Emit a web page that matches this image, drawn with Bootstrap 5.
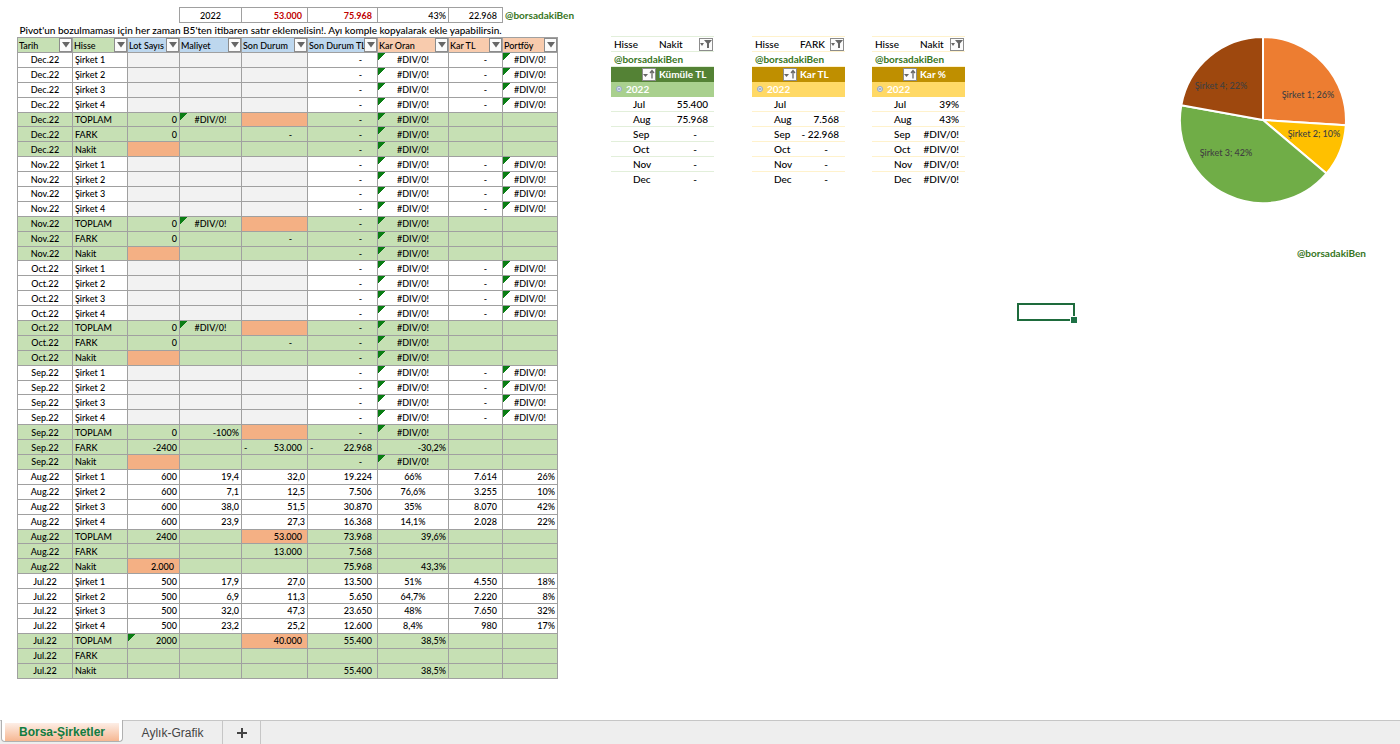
<!DOCTYPE html>
<html lang="tr">
<head>
<meta charset="utf-8">
<meta name="viewport" content="width=device-width, initial-scale=1">
<title>Borsa-Şirketler</title>
<link href="https://cdn.jsdelivr.net/npm/bootstrap@5.3.0/dist/css/bootstrap.min.css" rel="stylesheet">
<style>
body { font-family: Lato, "Liberation Sans", sans-serif; font-size: 9px; font-weight: 500; line-height: 13px; color: #000; background: #fff; }
table { border-collapse: collapse; table-layout: fixed; }
td, th { padding: 0 2px; font-weight: 500; white-space: nowrap; line-height: 13px; }
.handle { color: #38761d; font-size: 10px; font-weight: 700; }

.ledger { width: 541px; height: 672px; margin: 7px 0 0 17px; }
.ledger thead tr { height: 15px; }
.ledger .boxed, .ledger tbody td, .ledger .heads th { border: 1px solid #a0a0a0; }
.ledger .note { font-size: 10px; padding-left: 2px; }
.ledger .acc { padding-right: 5px; }
.ledger .dash { padding-right: 15px; }
.ledger .heads th { padding: 0 0 0 1px; }
.ledger .heads span { min-width: 0; }
.key { background: #c6e0b4; }
.inp { background: #bdd7ee; }
.res { background: #f8cbad; }
tr.total td { background: #c6e0b4; }
.ledger td.blank { background: #f2f2f2; }
.ledger td.entry, .ledger tr.total td.entry { background: #f4b084; }
.ledger td.err { background-image: linear-gradient(135deg, #0a7d14 0 5px, transparent 5px); background-size: 8px 8px; background-repeat: no-repeat; }
.red { color: #c00000; font-weight: 700; }

.drop { width: 14px; height: 14px; padding: 0; border: 1px solid #8c8c8c; background: #fbfbfb; display: flex; align-items: center; justify-content: center; flex: none; }
.ledger .drop { width: 13px; }
.drop svg { display: block; }

.pivots { margin: 36px 0 0 53px; }
.pivot { height: 150px; font-size: 10px; }
.pivot tr { height: 15px; }
.pivot th, .pivot td { border-bottom: 1px solid var(--line); padding: 0 6px 0 3px; }
.pivot tr:first-child > * { border-top: 1px solid var(--line); padding-right: 1px; }
.pivot tr:last-child > * { border-bottom: 0; }
.pivot .drop { height: 13px; }
.pivot .cap th { background: var(--cap); color: #fff; font-weight: 700; padding-right: 0; border-color: var(--cap); }
.pivot .year th { background: var(--year); color: #fff; font-weight: 700; padding-left: 5px; border-color: var(--year); }
.pivot .month { padding-left: 22px; padding-right: 0; }
.pivot .dash { padding-right: 17px; }
.pivot-green { width: 103px; --line: #e2efda; --cap: #548235; --year: #a9d08e; }
.pivot-gold { width: 93px; --line: #fff2cc; --cap: #bf8f00; --year: #ffd966; }
.gap-a { margin-right: 38px; }
.gap-b { margin-right: 27px; }

.picked { width: 58px; height: 18px; margin: 303px 0 0 52px; border: 2px solid #1e6b3c; }
.picked i { width: 6px; height: 6px; right: -4px; bottom: -4px; background: #1e7145; outline: 1px solid #fff; }
.chart { margin: 36px 34px 0 auto; }
.chart svg { display: block; margin-right: 19px; }
.chart text { font-size: 9px; fill: #404040; text-anchor: middle; }
.chart .handle { margin-top: 43px; }

.sheets { background: #eee; border-top: 1px solid #c6c6c6; height: 24px; font: 12px/16px "Liberation Sans", Arial, sans-serif; }
.sheets button { border: 0; border-right: 1px solid #c6c6c6; background: none; color: #444; padding: 0; }
.sheets .current { width: 122px; height: 22px; margin: -1px 0 0 1px; padding: 3px; background: #fff; border: 1px solid #b0b0b0; border-top: 0; border-radius: 0 0 4px 4px; }
.sheets .current span { display: block; line-height: 18px; font-weight: 700; color: #107c41; background: linear-gradient(#fdeee6, #f6b792); }
.sheets .other { width: 100px; }
.sheets .add { width: 38px; }
</style>
</head>
<body class="d-flex flex-column min-vh-100">

<main class="d-flex align-items-start flex-grow-1">
  <table class="ledger flex-shrink-0">
    <colgroup>
      <col style="width:55px"><col style="width:55px"><col style="width:52px"><col style="width:62px"><col style="width:66px"><col style="width:70px"><col style="width:71px"><col style="width:54px"><col style="width:55px">
    </colgroup>
    <thead>
      <tr>
        <td colspan="3"></td>
        <td class="boxed text-center">2022</td>
        <td class="boxed text-end acc red">53.000</td>
        <td class="boxed text-end acc red">75.968</td>
        <td class="boxed text-end">43%</td>
        <td class="boxed text-end acc">22.968</td>
        <td class="handle">@borsadakiBen</td>
      </tr>
      <tr><td colspan="9" class="note">Pivot'un bozulmaması için her zaman B5'ten itibaren satır eklemelisin!. Ayı komple kopyalarak ekle yapabilirsin.</td></tr>
      <tr class="heads" id="heads"></tr>
    </thead>
    <tbody id="rows"></tbody>
  </table>

  <section class="pivots d-flex flex-shrink-0" id="pivots"></section>

  <div class="picked position-relative flex-shrink-0"><i class="position-absolute"></i></div>

  <section class="chart d-flex flex-column align-items-end flex-shrink-0">
    <svg width="168" height="168" viewBox="-84 -84 168 168" role="img" aria-label="Portföy">
      <g stroke="#fff" stroke-width="2" stroke-linejoin="round">
        <path fill="#ed7d31" d="M0 0V-83A83 83 0 0 1 82.8 5.2Z"/>
        <path fill="#ffc000" d="M0 0L82.8 5.2A83 83 0 0 1 63.5 53.5Z"/>
        <path fill="#70ad47" d="M0 0L63.5 53.5A83 83 0 0 1 -81.7 -14.8Z"/>
        <path fill="#9e480e" d="M0 0L-81.7 -14.8A83 83 0 0 1 0 -83Z"/>
      </g>
      <text x="45" y="-22">Şirket 1; 26%</text>
      <text x="51" y="17">Şirket 2; 10%</text>
      <text x="-37" y="36">Şirket 3; 42%</text>
      <text x="-42" y="-31">Şirket 4; 22%</text>
    </svg>
    <div class="handle">@borsadakiBen</div>
  </section>
</main>

<footer class="sheets d-flex">
  <button type="button" class="current"><span>Borsa-Şirketler</span></button>
  <button type="button" class="other">Aylık-Grafik</button>
  <button type="button" class="add" aria-label="Sayfa ekle"><svg width="12" height="12" viewBox="0 0 12 12"><path d="M6 1v10M1 6h10" stroke="#444" stroke-width="2"/></svg></button>
</footer>

<script src="https://cdn.jsdelivr.net/npm/bootstrap@5.3.0/dist/js/bootstrap.bundle.min.js"></script>
<script>
const arrow = '<svg width="8" height="6" viewBox="0 0 8 6"><path d="M0 0h8L4 5.5z" fill="#666"/></svg>';
const funnel = '<svg width="12" height="10" viewBox="0 0 12 10"><path d="M0 4h4L2 7zM4 1h8L9 4.500V9H7V4.500z" fill="#666"/></svg>';
const sorted = '<svg width="12" height="10" viewBox="0 0 12 10"><path d="M0 5h5L2.500 8z" fill="#666"/><path d="M9 9.500V2M7 4l2-2.500L11 4" fill="none" stroke="#666" stroke-width="1.300"/></svg>';
const drop = (icon, label) => `<button type="button" class="drop" aria-label="${label}">${icon}</button>`;

const heads = [['Tarih','key'],['Hisse','key'],['Lot Sayıs','inp'],['Maliyet','inp'],['Son Durum','inp'],['Son Durum TL','inp'],['Kar Oran','res'],['Kar TL','res'],['Portföy','res']];
document.getElementById('heads').innerHTML = heads.map(([t, c]) =>
  `<th class="${c}"><div class="d-flex align-items-center"><span class="flex-fill">${t}</span>${drop(arrow, t + ' filtresi')}</div></th>`).join('');

// Cell prefixes: '!' error flag, '*' entry cell, '_' blank entry, '>' accounting format, '=' centred
const E = '!#DIV/0!', empty = ['_', '_', '_', '>-', E, '>-', E];
const open = [empty, empty, empty, empty, ['0', E, '*', '>-', E, '', ''], ['0', '', '>-', '>-', E, '', ''], ['*', '', '', '>-', E, '', '']];
const months = {
  Dec: open, Nov: open, Oct: open,
  Sep: [empty, empty, empty, empty, ['0', '-100%', '*', '>-', E, '', ''], ['-2400', '', '>-53.000', '>-22.968', '-30,2%', '', ''], ['*', '', '', '>-', E, '', '']],
  Aug: [
    ['600', '19,4', '32,0', '>19.224', '=66%', '>7.614', '26%'],
    ['600', '7,1', '12,5', '>7.506', '=76,6%', '>3.255', '10%'],
    ['600', '38,0', '51,5', '>30.870', '=35%', '>8.070', '42%'],
    ['600', '23,9', '27,3', '>16.368', '=14,1%', '>2.028', '22%'],
    ['2400', '', '*53.000', '>73.968', '39,6%', '', ''],
    ['', '', '>13.000', '>7.568', '', '', ''],
    ['*2.000', '', '', '>75.968', '43,3%', '', '']],
  Jul: [
    ['500', '17,9', '27,0', '>13.500', '=51%', '>4.550', '18%'],
    ['500', '6,9', '11,3', '>5.650', '=64,7%', '>2.220', '8%'],
    ['500', '32,0', '47,3', '>23.650', '=48%', '>7.650', '32%'],
    ['500', '23,2', '25,2', '>12.600', '=8,4%', '>980', '17%'],
    ['!2000', '', '*40.000', '>55.400', '38,5%', '', ''],
    ['', '', '', '', '', '', ''],
    ['', '', '', '>55.400', '38,5%', '', '']]
};
const labels = ['Şirket 1', 'Şirket 2', 'Şirket 3', 'Şirket 4', 'TOPLAM', 'FARK', 'Nakit'];
function cell(v) {
  const k = v[0], t = v.slice(1);
  if (k === '_') return '<td class="blank"></td>';
  if (k === '!') return `<td class="err ${t[0] === '#' ? 'text-center' : 'text-end'}">${t}</td>`;
  if (k === '*') return `<td class="entry text-end acc">${t}</td>`;
  if (k === '=') return `<td class="text-center">${t}</td>`;
  if (k === '>' && t === '-') return '<td class="text-end dash">-</td>';
  if (k === '>' && t[0] === '-') return `<td class="acc"><div class="d-flex justify-content-between"><span>-</span><span>${t.slice(1)}</span></div></td>`;
  if (k === '>') return `<td class="text-end acc">${t}</td>`;
  return `<td class="text-end">${v}</td>`;
}
document.getElementById('rows').innerHTML = Object.entries(months).map(([m, rows]) =>
  rows.map((r, i) => `<tr class="${i > 3 ? 'total' : ''}"><td class="text-center">${m}.22</td><td>${labels[i]}</td>${r.map(cell).join('')}</tr>`).join('')).join('');

const pivots = [
  ['pivot-green gap-a', 'Nakit', 'Kümüle TL', ['55.400', '75.968', '-', '-', '-', '-']],
  ['pivot-gold gap-b', 'FARK', 'Kar TL', ['', '7.568', '- 22.968', '-', '-', '-']],
  ['pivot-gold', 'Nakit', 'Kar %', ['39%', '43%', '#DIV/0!', '#DIV/0!', '#DIV/0!', '#DIV/0!']]
];
const names = ['Jul', 'Aug', 'Sep', 'Oct', 'Nov', 'Dec'];
document.getElementById('pivots').innerHTML = pivots.map(([cls, pick, title, vals]) => `
  <table class="pivot ${cls}"><colgroup><col style="width:45px"><col></colgroup>
    <tr><th>Hisse</th><td><div class="d-flex justify-content-between align-items-center">${pick}${drop(funnel, 'Hisse filtresi')}</div></td></tr>
    <tr><td colspan="2" class="handle">@borsadakiBen</td></tr>
    <tr class="cap"><th><div class="d-flex justify-content-end">${drop(sorted, 'Sırala')}</div></th><th>${title}</th></tr>
    <tr class="year"><th colspan="2"><div class="d-flex align-items-center gap-1"><svg width="6" height="6" viewBox="0 0 7 7"><circle cx="3.500" cy="3.500" r="3" fill="#dfe6f2" stroke="#8fa3c7"/><path d="M2 3.500h3" stroke="#5b6f99"/></svg>2022</div></th></tr>
    ${names.map((n, i) => `<tr><td class="month">${n}</td><td class="text-end ${vals[i] === '-' ? 'dash' : ''}">${vals[i]}</td></tr>`).join('')}
  </table>`).join('');
</script>
</body>
</html>
